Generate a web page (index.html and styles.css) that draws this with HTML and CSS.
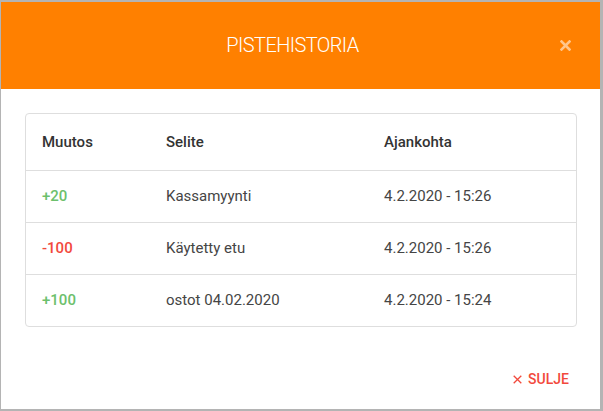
FILE: index.html
```html
<!DOCTYPE html>
<html lang="fi">
<head>
  <meta charset="UTF-8" />
  <title>Pistehistoria</title>
  <link rel="stylesheet" href="styles.css">
</head>
<body>
  <div class="modal">
    <div class="modal-header">
      <h2>PISTEHISTORIA</h2>
      <button class="close-x" aria-label="Sulje">
        <svg width="11" height="11" viewBox="0 0 11 11"><path d="M1.5 1.5 L9.5 9.5 M9.5 1.5 L1.5 9.5" stroke="currentColor" stroke-width="2.6" stroke-linecap="square"/></svg>
      </button>
    </div>

    <div class="modal-body">
      <div class="card">
        <table class="history">
          <thead>
            <tr>
              <th class="col-change">Muutos</th>
              <th class="col-desc">Selite</th>
              <th class="col-time">Ajankohta</th>
            </tr>
          </thead>
          <tbody>
            <tr>
              <td class="plus">+20</td>
              <td>Kassamyynti</td>
              <td>4.2.2020 - 15:26</td>
            </tr>
            <tr>
              <td class="minus">-100</td>
              <td>Käytetty etu</td>
              <td>4.2.2020 - 15:26</td>
            </tr>
            <tr>
              <td class="plus">+100</td>
              <td>ostot 04.02.2020</td>
              <td>4.2.2020 - 15:24</td>
            </tr>
          </tbody>
        </table>
      </div>
    </div>

    <div class="modal-footer">
      <button class="btn-close">
        <svg width="9" height="9" viewBox="0 0 9 9"><path d="M0.7 0.7 L8.3 8.3 M8.3 0.7 L0.7 8.3" stroke="currentColor" stroke-width="1.3"/></svg>
        SULJE
      </button>
    </div>
  </div>
</body>
</html>
```

FILE: styles.css
```css
:root {
  --orange: #ff8000;
  --green: #6cc06c;
  --red: #f2493c;
  --line: #dedede;
}

* {
  box-sizing: border-box;
}

body {
  margin: 0;
  padding: 2px 3px 0 1px;
  background: #b4b4b4;
  font-family: Roboto, "Liberation Sans", sans-serif;
  color: #3a3a3a;
}

.modal {
  background: #fff;
  height: 407px;
  display: flex;
  flex-direction: column;
}

.modal-header {
  background: var(--orange);
  height: 87px;
  padding-right: 16px;
  display: flex;
  align-items: center;
  justify-content: center;
  position: relative;
}

.modal-header h2 {
  margin: 0 0 2px 0;
  color: #fff;
  font-weight: 300;
  font-size: 20px;
  letter-spacing: -0.6px;
}

.close-x {
  position: absolute;
  right: 29px;
  top: 38px;
  background: none;
  border: none;
  padding: 0;
  color: rgba(255, 255, 255, 0.55);
  cursor: pointer;
  display: flex;
}

.modal-body {
  padding: 24px 23px 0 24px;
}

.card {
  border: 1px solid var(--line);
  border-radius: 4px;
  overflow: hidden;
}

.history {
  width: 100%;
  border-collapse: collapse;
  font-size: 15px;
}

.history th {
  text-align: left;
  font-weight: 500;
  color: #333;
  height: 56px;
  padding: 0 16px;
}

.history td {
  height: 52px;
  padding: 0 16px;
  border-top: 1px solid var(--line);
  color: #454545;
}

.col-change { width: 124px; }
.col-desc { width: 218px; }

.history td.plus {
  color: var(--green);
  font-weight: 500;
}

.history td.minus {
  color: var(--red);
  font-weight: 500;
}

.modal-footer {
  display: flex;
  justify-content: flex-end;
  padding: 40px 23px 0 0;
}

.btn-close {
  background: none;
  border: none;
  font-family: inherit;
  font-size: 14px;
  font-weight: 500;
  color: var(--red);
  padding: 4px 8px;
  display: flex;
  align-items: center;
  gap: 6px;
  cursor: pointer;
}
```
